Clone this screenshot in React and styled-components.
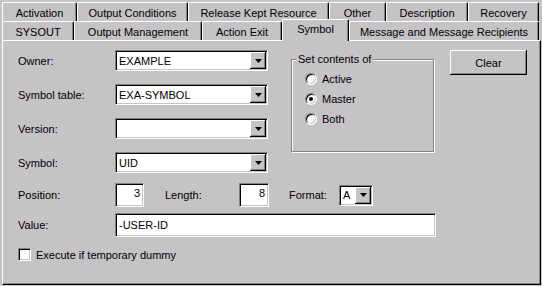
import React from "react";
import styled, { createGlobalStyle, css } from "styled-components";

const FACE = "#c6c3c6";
const SHADOW = "#848284";

const GlobalStyle = createGlobalStyle`
  html, body {
    margin: 0;
    padding: 0;
    background: ${FACE};
  }
  body {
    font-family: "Liberation Sans", Arial, sans-serif;
    font-size: 11px;
    color: #000;
  }
`;

const raised = css`
  background: ${FACE};
  box-shadow: inset -1px -1px #000, inset 1px 1px #fff, inset -2px -2px ${SHADOW};
`;

const sunken = css`
  box-sizing: border-box;
  background: #fff;
  border: 1px solid;
  border-color: ${SHADOW} #fff #fff ${SHADOW};
  box-shadow: inset 1px 1px #000, inset -1px -1px ${FACE};
`;

const Window = styled.div`
  width: 542px;
  height: 286px;
  box-sizing: border-box;
  padding: 2px 1px 1px 2px;
  display: flex;
  flex-direction: column;
`;

const TabStrip = styled.div`
  display: flex;
  flex-direction: column;
`;

const TabRow = styled.div`
  display: flex;
  height: 19px;
`;

const Tab = styled.div`
  box-sizing: border-box;
  position: relative;
  z-index: ${(p) => (p.$active ? 2 : 1)};
  width: ${(p) => p.$w}px;
  height: ${(p) => (p.$active ? 22 : 19)}px;
  margin-top: ${(p) => (p.$active ? -2 : 0)}px;
  padding: ${(p) => (p.$active ? "0 0 3px" : "1px 0 0")};
  display: flex;
  align-items: center;
  justify-content: center;
  white-space: nowrap;
  background: ${FACE};
  border-top: 1px solid #fff;
  border-left: 1px solid #fff;
  border-right: 1px solid #000;
  border-radius: 2px 2px 0 0;
  box-shadow: inset -1px 0 ${SHADOW};
`;

const Panel = styled.div`
  position: relative;
  z-index: 0;
  box-sizing: border-box;
  width: 539px;
  height: 245px;
  border-top: 1px solid #fff;
  border-left: 1px solid #fff;
  border-right: 1px solid #000;
  border-bottom: 1px solid #000;
  box-shadow: inset -1px -1px ${SHADOW};
  padding: 9px 0 0 15px;
`;

const TopSection = styled.div`
  display: flex;
  align-items: flex-start;
`;

const FieldGrid = styled.div`
  display: grid;
  grid-template-columns: 97px 153px;
  grid-auto-rows: 21px;
  row-gap: 13px;
  align-items: center;
`;

const Label = styled.span`
  white-space: nowrap;
  ${(p) => p.$w && `width: ${p.$w}px; flex: none;`}
  ${(p) => p.$ml && `margin-left: ${p.$ml}px;`}
`;

const ComboBox = styled.div`
  ${sunken};
  display: flex;
  align-items: center;
  width: ${(p) => p.$w}px;
  height: 21px;
  padding: 1px;
`;

const ComboText = styled.span`
  flex: 1;
  padding-left: 2px;
  white-space: nowrap;
  overflow: hidden;
`;

const DropButton = styled.div`
  ${raised};
  flex: none;
  width: 16px;
  height: 17px;
  display: flex;
  align-items: center;
  justify-content: center;
`;

const Arrow = () => (
  <svg width="7" height="4" viewBox="0 0 7 4">
    <polygon points="0,0 7,0 3.5,4" fill="#000" />
  </svg>
);

const Combo = ({ value, w }) => (
  <ComboBox $w={w}>
    <ComboText>{value}</ComboText>
    <DropButton>
      <Arrow />
    </DropButton>
  </ComboBox>
);

const GroupBox = styled.div`
  position: relative;
  box-sizing: border-box;
  margin: 9px 0 0 23px;
  width: 143px;
  height: 93px;
  border: 1px solid ${SHADOW};
  box-shadow: 1px 1px 0 #fff, inset 1px 1px 0 #fff;
  padding: 9px 0 0 13px;
  display: flex;
  flex-direction: column;
`;

const Legend = styled.span`
  position: absolute;
  top: -7px;
  left: 4px;
  padding: 0 2px;
  line-height: 13px;
  background: ${FACE};
`;

const RadioRow = styled.div`
  display: flex;
  align-items: center;
  gap: 5px;
  height: 20px;
`;

const RadioDot = styled.span`
  position: relative;
  box-sizing: border-box;
  width: 12px;
  height: 12px;
  border-radius: 50%;
  background: #fff;
  border: 1px solid;
  border-color: ${SHADOW} #fff #fff ${SHADOW};
  box-shadow: inset 1px 1px #000, inset -1px -1px ${FACE};

  ${(p) =>
    p.$checked &&
    css`
      &::after {
        content: "";
        position: absolute;
        left: 3px;
        top: 3px;
        width: 4px;
        height: 4px;
        border-radius: 50%;
        background: #000;
      }
    `}
`;

const Button = styled.div`
  ${raised};
  box-sizing: border-box;
  margin-left: 16px;
  width: 77px;
  height: 25px;
  display: flex;
  align-items: center;
  justify-content: center;
`;

const Row = styled.div`
  display: flex;
  align-items: center;
  height: ${(p) => p.$h}px;
  margin-top: ${(p) => p.$mt}px;
`;

const TextBox = styled.div`
  ${sunken};
  display: flex;
  align-items: center;
  justify-content: ${(p) => (p.$right ? "flex-end" : "flex-start")};
  width: ${(p) => p.$w}px;
  height: ${(p) => p.$h}px;
  padding: ${(p) => (p.$right ? "0 3px 4px 0" : "0 0 0 3px")};
  white-space: nowrap;
`;

const CheckBox = styled.span`
  ${sunken};
  width: 13px;
  height: 13px;
  margin-right: 5px;
`;

const topTabs = [
  ["Activation", 75],
  ["Output Conditions", 111],
  ["Release Kept Resource", 141],
  ["Other", 57],
  ["Description", 82],
  ["Recovery", 71],
];

const bottomTabs = [
  ["SYSOUT", 72],
  ["Output Management", 128],
  ["Action Exit", 80],
  ["Symbol", 67, true],
  ["Message and Message Recipients", 190],
];

const fields = [
  ["Owner:", "EXAMPLE"],
  ["Symbol table:", "EXA-SYMBOL"],
  ["Version:", ""],
  ["Symbol:", "UID"],
];

const App = () => {
  return (
    <Window>
      <GlobalStyle />
      <TabStrip>
        <TabRow>
          {topTabs.map(([name, w]) => (
            <Tab key={name} $w={w}>
              {name}
            </Tab>
          ))}
        </TabRow>
        <TabRow>
          {bottomTabs.map(([name, w, active]) => (
            <Tab key={name} $w={w} $active={active}>
              {name}
            </Tab>
          ))}
        </TabRow>
      </TabStrip>
      <Panel>
        <TopSection>
          <FieldGrid>
            {fields.map(([label, value]) => (
              <React.Fragment key={label}>
                <Label>{label}</Label>
                <Combo value={value} w={153} />
              </React.Fragment>
            ))}
          </FieldGrid>
          <GroupBox>
            <Legend>Set contents of</Legend>
            <RadioRow>
              <RadioDot />
              Active
            </RadioRow>
            <RadioRow>
              <RadioDot $checked />
              Master
            </RadioRow>
            <RadioRow>
              <RadioDot />
              Both
            </RadioRow>
          </GroupBox>
          <Button>Clear</Button>
        </TopSection>

        <Row $h={24} $mt={10}>
          <Label $w={97}>Position:</Label>
          <TextBox $w={29} $h={24} $right>3</TextBox>
          <Label $w={74} $ml={21}>Length:</Label>
          <TextBox $w={30} $h={24} $right>8</TextBox>
          <Label $w={50} $ml={20}>Format:</Label>
          <Combo value="A" w={34} />
        </Row>

        <Row $h={24} $mt={6}>
          <Label $w={97}>Value:</Label>
          <TextBox $w={321} $h={24}>-USER-ID</TextBox>
        </Row>

        <Row $h={13} $mt={11}>
          <CheckBox />
          Execute if temporary dummy
        </Row>
      </Panel>
    </Window>
  );
};

export default App;
